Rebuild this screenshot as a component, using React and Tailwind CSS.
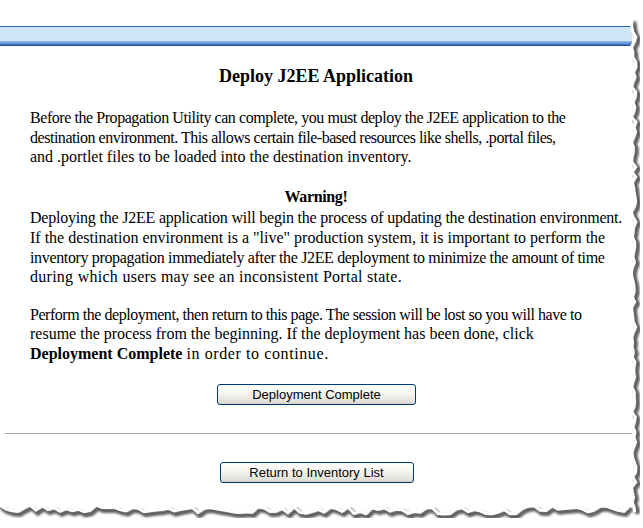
import React from 'react';

// ── Torn-paper shadow (right + bottom edge) ──────────────────────────────────

function jitter(i, seed) {
  const v = Math.sin(i * 12.9898 + seed * 78.233) * 43758.5453;
  return v - Math.floor(v);
}

function TornEdge() {
  let right = 'M 630 22';
  for (let y = 22; y <= 512; y += 5) {
    const x = 631 + jitter(y, 1) * 5;
    right += ` L ${x.toFixed(1)} ${y}`;
  }
  let bottom = 'M 0 506';
  for (let x = 0; x <= 634; x += 6) {
    const y = 505 + jitter(x, 2) * 7 + (x > 120 && x < 520 ? 2 : 0);
    bottom += ` L ${x} ${y.toFixed(1)}`;
  }
  return (
    <svg className="absolute inset-0 pointer-events-none" width="643" height="528" viewBox="0 0 643 528">
      <defs>
        <filter id="blur" x="-10%" y="-10%" width="120%" height="120%">
          <feGaussianBlur stdDeviation="1.3" />
        </filter>
      </defs>
      <path d={right} fill="none" stroke="#5f5f5f" strokeWidth="5" filter="url(#blur)" transform="translate(3 2)" />
      <path d={bottom} fill="none" stroke="#5f5f5f" strokeWidth="5" filter="url(#blur)" transform="translate(2 3)" />
      <path d={right} fill="none" stroke="#ffffff" strokeWidth="3" />
      <path d={bottom} fill="none" stroke="#ffffff" strokeWidth="3" />
    </svg>
  );
}

// ── XP-style push button ─────────────────────────────────────────────────────

function PushButton({ children, width }) {
  return (
    <button
      className={`${width} h-[21px] rounded-[3px] border border-[#003c74] bg-gradient-to-b from-[#ffffff] via-[#f4f3ee] to-[#dcdad0] text-[13px] leading-none text-black font-['Liberation_Sans',Arial,sans-serif] shadow-[inset_0_-1px_0_#d6d0c5]`}
    >
      {children}
    </button>
  );
}

// ── Main component ───────────────────────────────────────────────────────────

export default function App() {
  return (
    <div className="relative w-[643px] h-[528px] bg-white overflow-hidden font-['Liberation_Serif','Times_New_Roman',serif] text-[16px] leading-[19.6px] text-black">
      <div className="w-[632px] pt-[26px]">

        {/* ── Banner ── */}
        <div className="h-[20px] border-t border-[#2f63b8] bg-[#cfe6fb] flex flex-col">
          <div className="flex-1 bg-[radial-gradient(#eef7ff_0.6px,transparent_0.7px)] bg-[length:2px_2px]" />
          <div className="h-[4px] bg-gradient-to-b from-[#9cc2ee] to-[#3d6fc0]" />
          <div className="h-px bg-[#1d4a9a]" />
        </div>

        {/* ── Title ── */}
        <div className="mt-[19px] text-center font-bold text-[18px] leading-[22px]">Deploy J2EE Application</div>

        {/* ── Intro ── */}
        <p className="mt-[21px] pl-[30px] whitespace-nowrap">
          <span className="block tracking-[-0.44px]">Before the Propagation Utility can complete, you must deploy the J2EE application to the</span>
          <span className="block tracking-[-0.47px]">destination environment. This allows certain file-based resources like shells, .portal files,</span>
          <span className="block">and .portlet files to be loaded into the destination inventory.</span>
        </p>

        {/* ── Warning ── */}
        <div className="mt-[20px] text-center font-bold tracking-[-0.35px]">Warning!</div>
        <p className="mt-[2px] pl-[30px] whitespace-nowrap">
          <span className="block tracking-[-0.21px]">Deploying the J2EE application will begin the process of updating the destination environment.</span>
          <span className="block">If the destination environment is a "live" production system, it is important to perform the</span>
          <span className="block tracking-[-0.35px]">inventory propagation immediately after the J2EE deployment to minimize the amount of time</span>
          <span className="block tracking-[0.27px]">during which users may see an inconsistent Portal state.</span>
        </p>

        <p className="mt-[18px] pl-[30px] whitespace-nowrap">
          <span className="block tracking-[-0.46px]">Perform the deployment, then return to this page. The session will be lost so you will have to</span>
          <span className="block">resume the process from the beginning. If the deployment has been done, click</span>
          <span className="block">
            <b>Deployment Complete</b> <span className="tracking-[0.6px]">in order to continue.</span>
          </span>
        </p>

        {/* ── Actions ── */}
        <div className="mt-[20px] flex justify-center pl-[1px]">
          <PushButton width="w-[199px]">Deployment Complete</PushButton>
        </div>

        <div className="mt-[28px] ml-[5px] h-px bg-[#aca899]" />

        <div className="mt-[28px] flex justify-center pl-[1px]">
          <PushButton width="w-[194px]">Return to Inventory List</PushButton>
        </div>
      </div>

      <TornEdge />
    </div>
  );
}
